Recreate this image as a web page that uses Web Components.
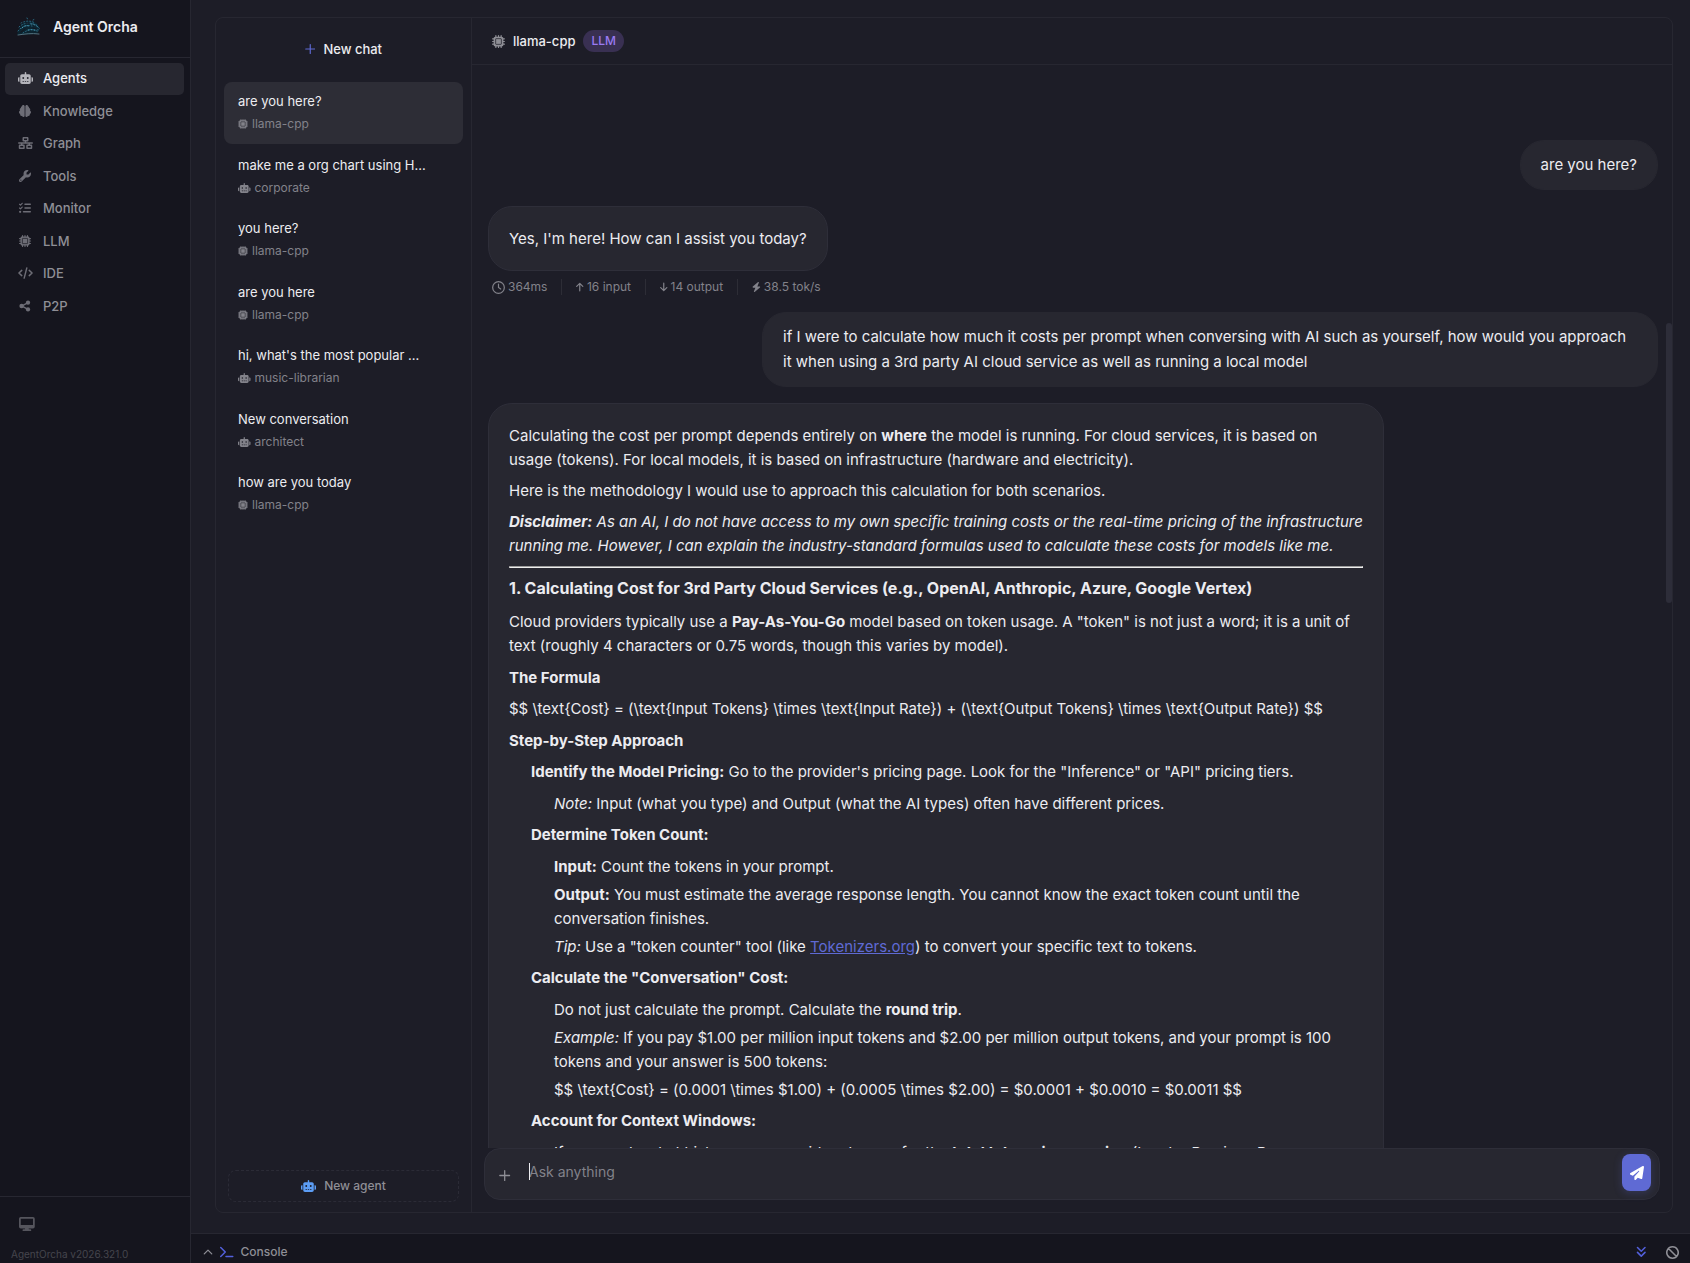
<!DOCTYPE html>
<html lang="en">
<head>
<meta charset="utf-8">
<meta name="viewport" content="width=device-width, initial-scale=1">
<title>Agent Orcha</title>
<style>
    :root {
        --bg: #1d1d27;
        --bg-dark: #15151e;
        --surface: #272730;
        --surface-active: #2d2d36;
        --line: #272731;
        --text: #ececf0;
        --muted: #8f8f96;
        --dim: #82828a;
        --faint: #45454d;
        --accent: #5f6ad4;
    }

    body {
        margin: 0;
        height: 100vh;
        overflow: hidden;
        background: var(--bg);
        color: var(--text);
        font-family: Inter, "Liberation Sans", sans-serif;
        font-size: 13px;
        line-height: 20px;
    }
</style>
</head>
<body>

<orcha-app>
    <app-sidebar slot="sidebar" version="AgentOrcha v2026.321.0">
        <nav-item icon="robot" active>Agents</nav-item>
        <nav-item icon="brain">Knowledge</nav-item>
        <nav-item icon="network">Graph</nav-item>
        <nav-item icon="wrench">Tools</nav-item>
        <nav-item icon="list">Monitor</nav-item>
        <nav-item icon="chip">LLM</nav-item>
        <nav-item icon="code">IDE</nav-item>
        <nav-item icon="share">P2P</nav-item>
    </app-sidebar>

    <conversation-list slot="conversations">
        <conversation-item icon="chip" agent="llama-cpp" active>are you here?</conversation-item>
        <conversation-item icon="robot" agent="corporate">make me a org chart using H...</conversation-item>
        <conversation-item icon="chip" agent="llama-cpp">you here?</conversation-item>
        <conversation-item icon="chip" agent="llama-cpp">are you here</conversation-item>
        <conversation-item icon="robot" agent="music-librarian">hi, what's the most popular ...</conversation-item>
        <conversation-item icon="robot" agent="architect">New conversation</conversation-item>
        <conversation-item icon="chip" agent="llama-cpp">how are you today</conversation-item>
    </conversation-list>

    <chat-panel slot="chat" agent="llama-cpp" kind="LLM">
        <chat-message from="user">are you here?</chat-message>
        <chat-message from="agent">Yes, I'm here! How can I assist you today?</chat-message>
        <message-stats time="364ms" input="16 input" output="14 output" speed="38.5 tok/s"></message-stats>
        <chat-message from="user">if I were to calculate how much it costs per prompt when conversing with AI such as yourself, how would you approach it when using a 3rd party AI cloud service as well as running a local model</chat-message>
        <chat-message from="agent">
            <rich-text>
                <template>
                    <p>Calculating the cost per prompt depends entirely on <strong>where</strong> the model is running. For cloud services, it is based on usage (tokens). For local models, it is based on infrastructure (hardware and electricity).</p>
                    <p>Here is the methodology I would use to approach this calculation for both scenarios.</p>
                    <p><em><strong>Disclaimer:</strong> As an AI, I do not have access to my own specific training costs or the real-time pricing of the infrastructure running me. However, I can explain the industry-standard formulas used to calculate these costs for models like me.</em></p>
                    <hr>
                    <h3>1. Calculating Cost for 3rd Party Cloud Services (e.g., OpenAI, Anthropic, Azure, Google Vertex)</h3>
                    <p>Cloud providers typically use a <strong>Pay-As-You-Go</strong> model based on token usage. A "token" is not just a word; it is a unit of text (roughly 4 characters or 0.75 words, though this varies by model).</p>
                    <h4>The Formula</h4>
                    <p>$$ \text{Cost} = (\text{Input Tokens} \times \text{Input Rate}) + (\text{Output Tokens} \times \text{Output Rate}) $$</p>
                    <h4>Step-by-Step Approach</h4>
                    <ol>
                        <li><strong>Identify the Model Pricing:</strong> Go to the provider's pricing page. Look for the "Inference" or "API" pricing tiers.
                            <ul>
                                <li><em>Note:</em> Input (what you type) and Output (what the AI types) often have different prices.</li>
                            </ul>
                        </li>
                        <li><strong>Determine Token Count:</strong>
                            <ul>
                                <li><strong>Input:</strong> Count the tokens in your prompt.</li>
                                <li><strong>Output:</strong> You must estimate the average response length. You cannot know the exact token count until the conversation finishes.</li>
                                <li><em>Tip:</em> Use a "token counter" tool (like <a href="#tokenizers">Tokenizers.org</a>) to convert your specific text to tokens.</li>
                            </ul>
                        </li>
                        <li><strong>Calculate the "Conversation" Cost:</strong>
                            <ul>
                                <li>Do not just calculate the prompt. Calculate the <strong>round trip</strong>.</li>
                                <li><em>Example:</em> If you pay $1.00 per million input tokens and $2.00 per million output tokens, and your prompt is 100 tokens and your answer is 500 tokens:</li>
                                <li>$$ \text{Cost} = (0.0001 \times $1.00) + (0.0005 \times $2.00) = $0.0001 + $0.0010 = $0.0011 $$</li>
                            </ul>
                        </li>
                        <li><strong>Account for Context Windows:</strong>
                            <ul>
                                <li>If you send a chat history, your provider charges for the <strong>total tokens in a session</strong> (Input + Previous Responses + growth).</li>
                            </ul>
                        </li>
                    </ol>
                </template>
            </rich-text>
        </chat-message>
    </chat-panel>

    <console-bar slot="console"></console-bar>
</orcha-app>

<script>
/* Each icon is [viewBox, markup]; shapes take their colour from currentColor */
const icons = {
    robot: ['0 0 640 512', '<path d="M320 0c17.7 0 32 14.3 32 32V96H472c39.8 0 72 32.2 72 72V440c0 39.8-32.2 72-72 72H168c-39.8 0-72-32.2-72-72V168c0-39.8 32.2-72 72-72H288V32c0-17.7 14.3-32 32-32zM208 384c-8.8 0-16 7.2-16 16s7.2 16 16 16h32c8.8 0 16-7.2 16-16s-7.2-16-16-16H208zm96 0c-8.8 0-16 7.2-16 16s7.2 16 16 16h32c8.8 0 16-7.2 16-16s-7.2-16-16-16H304zm96 0c-8.8 0-16 7.2-16 16s7.2 16 16 16h32c8.8 0 16-7.2 16-16s-7.2-16-16-16H400zM264 256a40 40 0 1 0-80 0 40 40 0 1 0 80 0zm152 40a40 40 0 1 0 0-80 40 40 0 1 0 0 80zM48 224H64V416H48c-26.5 0-48-21.5-48-48V272c0-26.5 21.5-48 48-48zm544 0c26.5 0 48 21.5 48 48v96c0 26.5-21.5 48-48 48H576V224h16z"/>'],
    brain: ['0 0 512 512', '<path d="M184 0c30.9 0 56 25.1 56 56V456c0 30.9-25.1 56-56 56c-28.9 0-52.7-21.9-55.7-50.1c-5.2 1.4-10.7 2.1-16.3 2.1c-35.3 0-64-28.7-64-64c0-7.4 1.3-14.6 3.6-21.2C21.4 367.4 0 338.2 0 304c0-31.9 18.7-59.5 45.8-72.3C37.1 220.8 32 207 32 192c0-30.7 21.6-56.3 50.4-62.6C80.8 123.9 80 118 80 112c0-29.9 20.6-55.1 48.3-62.1C131.3 21.9 155.1 0 184 0zM328 0c28.9 0 52.6 21.9 55.7 49.9c27.8 7 48.3 32.1 48.3 62.1c0 6-.8 11.9-2.4 17.4c28.8 6.2 50.4 31.9 50.4 62.6c0 15-5.1 28.8-13.8 39.7C493.3 244.5 512 272.1 512 304c0 34.2-21.4 63.4-51.6 74.8c2.3 6.6 3.6 13.8 3.6 21.2c0 35.3-28.7 64-64 64c-5.6 0-11.1-.7-16.3-2.1c-3 28.2-26.8 50.1-55.7 50.1c-30.9 0-56-25.1-56-56V56c0-30.9 25.1-56 56-56z"/>'],
    network: ['0 0 640 512', '<path d="M256 64H384v64H256V64zM240 0c-26.5 0-48 21.5-48 48v96c0 26.5 21.5 48 48 48h48v32H32c-17.7 0-32 14.3-32 32s14.3 32 32 32h96v32H80c-26.5 0-48 21.5-48 48v96c0 26.5 21.5 48 48 48H240c26.5 0 48-21.5 48-48V368c0-26.5-21.5-48-48-48H192V288H448v32H400c-26.5 0-48 21.5-48 48v96c0 26.5 21.5 48 48 48H560c26.5 0 48-21.5 48-48V368c0-26.5-21.5-48-48-48H512V288h96c17.7 0 32-14.3 32-32s-14.3-32-32-32H352V192h48c26.5 0 48-21.5 48-48V48c0-26.5-21.5-48-48-48H240zM96 448V384H224v64H96zm320-64H544v64H416V384z"/>'],
    wrench: ['0 0 512 512', '<path d="M352 320c88.4 0 160-71.6 160-160c0-15.3-2.2-30.1-6.2-44.2c-3.1-10.8-16.4-13.2-24.3-5.3l-76.8 76.8c-3 3-7.1 4.7-11.3 4.7H336c-8.8 0-16-7.2-16-16V118.6c0-4.2 1.7-8.3 4.7-11.3l76.8-76.8c7.9-7.9 5.4-21.2-5.3-24.3C382.1 2.2 367.3 0 352 0C263.6 0 192 71.6 192 160c0 19.1 3.4 37.5 9.5 54.5L19.9 396.1C7.2 408.8 0 426.1 0 444.1C0 481.6 30.4 512 67.9 512c18 0 35.3-7.2 48-19.9L297.5 310.5c17 6.2 35.4 9.5 54.5 9.5zM80 408a24 24 0 1 1 0 48 24 24 0 1 1 0-48z"/>'],
    list: ['0 0 512 512', '<g fill="none" stroke="currentColor" stroke-width="48" stroke-linecap="round" stroke-linejoin="round"><path d="M24 96l40 38 72-80M24 256l40 38 72-80"/><path stroke-width="64" d="M256 96H480M256 256H480M192 416H480"/></g><circle cx="48" cy="416" r="48"/>'],
    chip: ['0 0 512 512', '<path d="M176 24c0-13.3-10.7-24-24-24s-24 10.7-24 24V64c-35.3 0-64 28.7-64 64H24c-13.3 0-24 10.7-24 24s10.7 24 24 24H64v56H24c-13.3 0-24 10.7-24 24s10.7 24 24 24H64v56H24c-13.3 0-24 10.7-24 24s10.7 24 24 24H64c0 35.3 28.7 64 64 64v40c0 13.3 10.7 24 24 24s24-10.7 24-24V448h56v40c0 13.3 10.7 24 24 24s24-10.7 24-24V448h56v40c0 13.3 10.7 24 24 24s24-10.7 24-24V448c35.3 0 64-28.7 64-64h40c13.3 0 24-10.7 24-24s-10.7-24-24-24H448V280h40c13.3 0 24-10.7 24-24s-10.7-24-24-24H448V176h40c13.3 0 24-10.7 24-24s-10.7-24-24-24H448c0-35.3-28.7-64-64-64V24c0-13.3-10.7-24-24-24s-24 10.7-24 24V64H280V24c0-13.3-10.7-24-24-24s-24 10.7-24 24V64H176V24z"/><rect x="144" y="144" width="224" height="224" rx="16" fill="none" stroke="var(--bg)" stroke-width="28"/>'],
    code: ['0 0 640 512', '<path fill="none" stroke="currentColor" stroke-width="62" stroke-linecap="round" stroke-linejoin="round" d="M160 144L40 256l120 112M480 144l120 112-120 112M376 40L264 472"/>'],
    share: ['0 0 512 512', '<path fill="none" stroke="currentColor" stroke-width="60" d="M380 110L130 256l250 146"/><circle cx="112" cy="256" r="96"/><circle cx="384" cy="112" r="92"/><circle cx="384" cy="400" r="92"/>'],
    desktop: ['0 0 576 512', '<path fill-rule="evenodd" d="M64 0h448a64 64 0 0 1 64 64v288a64 64 0 0 1-64 64H352l11 32h53a32 32 0 0 1 0 64H160a32 32 0 0 1 0-64h53l11-32H64a64 64 0 0 1-64-64V64A64 64 0 0 1 64 0zM64 64v224h448V64z"/>'],
    plus: ['0 0 448 512', '<path fill="none" stroke="currentColor" stroke-width="50" stroke-linecap="round" d="M224 64v384M32 256h384"/>'],
    clock: ['0 0 512 512', '<g fill="none" stroke="currentColor" stroke-width="48" stroke-linecap="round"><circle cx="256" cy="256" r="230"/><path d="M256 120v136l88 60"/></g>'],
    up: ['0 0 384 512', '<path fill="none" stroke="currentColor" stroke-width="62" stroke-linecap="round" stroke-linejoin="round" d="M192 450V76M36 224L192 70l156 154"/>'],
    down: ['0 0 384 512', '<path fill="none" stroke="currentColor" stroke-width="62" stroke-linecap="round" stroke-linejoin="round" d="M192 62v374M36 288l156 154 156-154"/>'],
    bolt: ['0 0 448 512', '<path d="M349 44c6-14 1-30-11-39s-29-8-41 2L41 231a32 32 0 0 0 21 57h112L99 468c-6 14-1 30 11 39s29 8 41-2l256-224a32 32 0 0 0-21-57H274z"/>'],
    chevron: ['0 0 512 512', '<path fill="none" stroke="currentColor" stroke-width="64" stroke-linecap="round" stroke-linejoin="round" d="M64 352l192-192 192 192"/>'],
    terminal: ['0 0 576 512', '<path fill="none" stroke="currentColor" stroke-width="64" stroke-linecap="round" stroke-linejoin="round" d="M32 64l192 192L32 448M256 448h288"/>'],
    angles: ['0 0 448 512', '<path fill="none" stroke="currentColor" stroke-width="64" stroke-linecap="round" stroke-linejoin="round" d="M64 64l160 160L384 64M64 272l160 160 160-160"/>'],
    ban: ['0 0 512 512', '<path fill="none" stroke="currentColor" stroke-width="62" d="M256 32a224 224 0 1 0 .1 0zM98 98l316 316"/>'],
    send: ['0 0 512 512', '<path d="M498.1 5.6c10.1 7 15.4 19.1 13.5 31.2l-64 416c-1.5 9.7-7.4 18.2-16 23s-18.9 5.4-28 1.6L284 427.7l-68.5 74.1c-8.9 9.7-22.9 12.9-35.2 8.1S160 493.2 160 480V396.4c0-4 1.5-7.8 4.2-10.7L331.8 202.8c5.8-6.3 5.6-16-.4-22s-15.7-6.4-22-.7L106 360.8 17.7 316.6C7.1 311.3 .3 300.7 0 288.9s5.9-22.8 16.1-28.7l448-256c10.7-6.1 23.9-5.5 34 1.4z"/>']
};

class UiIcon extends HTMLElement {

    connectedCallback() {
        const [box, shapes] = icons[this.getAttribute('name')];
        const size = this.getAttribute('size') || 12;
        this.attachShadow({ mode: 'open' });
        this.shadowRoot.innerHTML = `
        <style>
            :host {
                display: inline-flex;
                flex: none;
            }

            svg {
                display: block;
                fill: currentColor;
            }
        </style>
        <svg viewBox="${box}" height="${size}" aria-hidden="true">${shapes}</svg>
        `;
    }
}

class OrchaApp extends HTMLElement {

    connectedCallback() {
        this.attachShadow({ mode: 'open' });
        this.shadowRoot.innerHTML = `
        <style>
            :host {
                display: grid;
                grid-template-columns: 191px minmax(0, 1fr);
                height: 100%;
            }

            .main {
                display: flex;
                flex-direction: column;
                min-height: 0;
            }

            .panel {
                flex: 1;
                min-height: 0;
                display: grid;
                grid-template-columns: 256px minmax(0, 1fr);
                grid-template-rows: minmax(0, 1fr);
                margin: 17px 17px 20px 24px;
                border: 1px solid var(--line);
                border-radius: 8px;
                overflow: hidden;
            }
        </style>
        <slot name="sidebar"></slot>
        <div class="main">
            <main class="panel">
                <slot name="conversations"></slot>
                <slot name="chat"></slot>
            </main>
            <slot name="console"></slot>
        </div>
        `;
    }
}

class AppSidebar extends HTMLElement {

    connectedCallback() {
        this.attachShadow({ mode: 'open' });
        this.shadowRoot.innerHTML = `
        <style>
            :host {
                display: flex;
                flex-direction: column;
                background: var(--bg-dark);
                border-right: 1px solid var(--line);
            }

            header {
                display: flex;
                align-items: center;
                gap: 12px;
                height: 57px;
                padding: 0 16px 4px;
                box-sizing: border-box;
                font-size: 14px;
                font-weight: 600;
            }

            nav {
                flex: 1;
                border-top: 1px solid var(--line);
                padding: 5px 6px 0 5px;
            }

            .items {
                display: grid;
                grid-auto-rows: 1fr;
                height: 260px;
            }

            footer {
                border-top: 1px solid var(--line);
                height: 66px;
                overflow: hidden;
                color: var(--faint);
            }

            button {
                display: block;
                margin: 20px 0 0 19px;
                padding: 0;
                border: 0;
                background: none;
                color: #55555d;
            }

            small {
                display: block;
                margin: 12px 0 0 11px;
                font-size: 10px;
                line-height: 16px;
            }
        </style>
        <header>
            <svg width="25" height="20" viewBox="0 0 25 20" fill="none" stroke-linecap="round" aria-hidden="true">
                <path fill="#0c2430" d="M1 18C3 8 7 4 13 4c6 0 10 3 11 8l-3 5z"/>
                <g stroke="#2b6880" stroke-dasharray="1 2">
                    <path d="M5 6c4-2 9-3 14 0M3 10c5-5 13-5 19-1M2 14c4-5 9-6 14-5M7 16c4-3 9-4 16-3M11 1l1 2M17 3l2-1"/>
                </g>
                <path stroke="#4b9dba" stroke-dasharray="1 2" d="M6 11c2-2 4-3 7-2M15 7c3 0 6 2 8 4M12 13c3-1 6 0 9 1"/>
                <path stroke="#54727f" d="M2 18c7-1 13-2 21-1"/>
                <path stroke="#15151e" d="M5 15l4-3M17 11l3 1M10 6l3 0"/>
            </svg>
            <span>Agent Orcha</span>
        </header>
        <nav aria-label="Main"><div class="items"><slot></slot></div></nav>
        <footer>
            <button type="button" aria-label="Display"><ui-icon name="desktop" size="14"></ui-icon></button>
            <small>${this.getAttribute('version')}</small>
        </footer>
        `;
    }
}

class NavItem extends HTMLElement {

    connectedCallback() {
        this.attachShadow({ mode: 'open' });
        this.shadowRoot.innerHTML = `
        <style>
            :host {
                display: block;
                color: var(--muted);
            }

            a {
                display: flex;
                align-items: center;
                gap: 8px;
                height: 32px;
                box-sizing: border-box;
                padding: 0 10px 2px;
                border-radius: 5px;
                color: inherit;
                font-weight: 500;
                text-decoration: none;
            }

            ui-icon {
                width: 20px;
                justify-content: center;
                color: #6d6d76;
                --bg: var(--bg-dark);
            }

            :host([active]) a {
                background: var(--surface);
                color: var(--text);
            }

            :host([active]) ui-icon {
                color: #b4b4ba;
            }
        </style>
        <a href="#"><ui-icon name="${this.getAttribute('icon')}"></ui-icon><slot></slot></a>
        `;
    }
}

class ConversationList extends HTMLElement {

    connectedCallback() {
        this.attachShadow({ mode: 'open' });
        this.shadowRoot.innerHTML = `
        <style>
            :host {
                display: flex;
                flex-direction: column;
                padding: 0 8px;
                border-right: 1px solid var(--line);
            }

            button {
                display: flex;
                align-items: center;
                justify-content: center;
                gap: 8px;
                font: inherit;
                font-weight: 500;
            }

            .new-chat {
                height: 62px;
                margin-bottom: 2px;
                padding: 0;
                border: 0;
                background: none;
                color: var(--text);
            }

            .new-chat ui-icon {
                color: var(--accent);
            }

            .items {
                display: grid;
                grid-auto-rows: 1fr;
                gap: 2px;
                height: 443px;
            }

            .new-agent {
                margin: auto 4px 10px;
                height: 32px;
                padding: 0;
                border: 1px dashed #2b2b36;
                border-radius: 8px;
                background: none;
                color: var(--muted);
                font-size: 12px;
            }

            .new-agent ui-icon {
                color: #5c9df5;
            }
        </style>
        <button class="new-chat" type="button"><ui-icon name="plus"></ui-icon>New chat</button>
        <div class="items"><slot></slot></div>
        <button class="new-agent" type="button"><ui-icon name="robot"></ui-icon>New agent</button>
        `;
    }
}

class ConversationItem extends HTMLElement {

    connectedCallback() {
        this.attachShadow({ mode: 'open' });
        this.shadowRoot.innerHTML = `
        <style>
            :host {
                display: grid;
            }

            a {
                padding: 9px 14px;
                border-radius: 8px;
                color: inherit;
                text-decoration: none;
            }

            :host([active]) a {
                background: var(--surface-active);
            }

            .agent {
                display: flex;
                align-items: center;
                gap: 4px;
                margin-top: 3px;
                color: var(--dim);
                font-size: 12px;
            }
        </style>
        <a href="#">
            <slot></slot>
            <span class="agent"><ui-icon name="${this.getAttribute('icon')}" size="10"></ui-icon>${this.getAttribute('agent')}</span>
        </a>
        `;
    }
}

class ChatPanel extends HTMLElement {

    connectedCallback() {
        this.attachShadow({ mode: 'open' });
        this.shadowRoot.innerHTML = `
        <style>
            :host {
                display: flex;
                flex-direction: column;
                position: relative;
                min-height: 0;
            }

            header {
                display: flex;
                align-items: center;
                gap: 8px;
                height: 46px;
                padding: 0 20px;
                border-bottom: 1px solid var(--line);
                font-weight: 500;
            }

            header ui-icon {
                color: var(--muted);
            }

            .badge {
                padding: 0 8px;
                border-radius: 11px;
                background: #393052;
                color: #9a7bf2;
                font-size: 12px;
                line-height: 22px;
            }

            .messages {
                flex: 1;
                min-height: 0;
                overflow: hidden;
                display: flex;
                flex-direction: column;
                padding: 75px 14px 0 16px;
            }

            .thumb {
                position: absolute;
                top: 305px;
                right: 0;
                width: 6px;
                height: 280px;
                border-radius: 3px;
                background: #2d2d39;
            }
        </style>
        <header>
            <ui-icon name="chip" size="13"></ui-icon>
            <span>${this.getAttribute('agent')}</span>
            <span class="badge">${this.getAttribute('kind')}</span>
        </header>
        <div class="messages"><slot></slot></div>
        <div class="thumb"></div>
        <chat-composer></chat-composer>
        `;
    }
}

class ChatMessage extends HTMLElement {

    connectedCallback() {
        this.attachShadow({ mode: 'open' });
        this.shadowRoot.innerHTML = `
        <style>
            :host {
                display: block;
                flex: none;
                box-sizing: border-box;
                max-width: 896px;
                border: 1px solid var(--surface);
                border-radius: 24px;
                background: var(--surface);
                font-size: 15px;
            }

            :host([from="user"]) {
                align-self: flex-end;
                margin-bottom: 16px;
                padding: 11px 20px 12px;
                line-height: 25px;
            }

            :host([from="agent"]) {
                align-self: flex-start;
                padding: 20px 20px 19px;
                border-color: #2e2e39;
                line-height: 24px;
            }
        </style>
        <slot></slot>
        `;
    }
}

/* Takes the formatted answer from a template child */
class RichText extends HTMLElement {

    connectedCallback() {
        this.attachShadow({ mode: 'open' });
        this.shadowRoot.innerHTML = `
        <style>
            :host {
                display: block;
            }

            p {
                margin: 0 0 7px;
            }

            strong {
                font-weight: 700;
            }

            hr {
                margin: 8px 0;
                color: #d8d8d8;
            }

            h3, h4 {
                margin: 8px 0 7px;
                font-size: 15px;
                line-height: 24px;
                font-weight: 700;
            }

            h3 {
                margin: 0 0 10px;
                font-size: 16px;
            }

            ol, ul {
                margin: 0;
                padding-left: 22px;
                list-style: none;
            }

            ol > li {
                margin-bottom: 7px;
            }

            ul {
                padding-left: 23px;
                padding-top: 8px;
            }

            ul > li + li {
                margin-top: 4px;
            }

            a {
                color: var(--accent);
            }
        </style>
        `;
        this.shadowRoot.append(this.querySelector('template').content.cloneNode(true));
    }
}

class MessageStats extends HTMLElement {

    connectedCallback() {
        this.attachShadow({ mode: 'open' });
        this.shadowRoot.innerHTML = `
        <style>
            :host {
                display: flex;
                flex: none;
                align-items: center;
                gap: 14px;
                margin: 6px 0 15px;
                padding-left: 4px;
                color: var(--dim);
                font-size: 12px;
            }

            span {
                display: flex;
                align-items: center;
                gap: 3px;
            }

            i {
                width: 1px;
                height: 16px;
                background: var(--surface-active);
            }
        </style>
        <span><ui-icon name="clock" size="13"></ui-icon>${this.getAttribute('time')}</span><i></i>
        <span><ui-icon name="up" size="10"></ui-icon>${this.getAttribute('input')}</span><i></i>
        <span><ui-icon name="down" size="10"></ui-icon>${this.getAttribute('output')}</span><i></i>
        <span><ui-icon name="bolt" size="10"></ui-icon>${this.getAttribute('speed')}</span>
        `;
    }
}

class ChatComposer extends HTMLElement {

    connectedCallback() {
        this.attachShadow({ mode: 'open' });
        this.shadowRoot.innerHTML = `
        <style>
            :host {
                display: flex;
                margin: 0 12px 12px;
                height: 50px;
                border: 1px solid #2e2e39;
                border-radius: 16px;
                background: var(--surface);
            }

            button {
                display: flex;
                align-items: center;
                justify-content: center;
                padding: 0;
                border: 0;
                background: none;
                color: var(--muted);
            }

            .attach {
                width: 40px;
                padding-top: 2px;
            }

            .field {
                flex: 1;
                display: flex;
                position: relative;
                margin-left: 4px;
            }

            textarea {
                flex: 1;
                height: 24px;
                margin: 11px 0 0;
                padding: 0;
                border: 0;
                outline: 0;
                resize: none;
                overflow: hidden;
                background: none;
                color: var(--text);
                font: inherit;
                font-size: 14px;
                line-height: 24px;
            }

            textarea::placeholder {
                color: var(--dim);
            }

            .caret {
                position: absolute;
                top: 14px;
                left: 0;
                width: 1px;
                height: 17px;
                background: var(--text);
            }

            .send {
                width: 29px;
                height: 37px;
                margin: 5px 8px 0 0;
                border-radius: 8px;
                background: var(--accent);
                color: #fff;
                box-shadow: 0 2px 8px rgba(95, 106, 212, 0.25);
            }
        </style>
        <button class="attach" type="button" aria-label="Attach"><ui-icon name="plus" size="13"></ui-icon></button>
        <div class="field">
            <textarea rows="1" placeholder="Ask anything" aria-label="Message"></textarea>
            <span class="caret"></span>
        </div>
        <button class="send" type="button" aria-label="Send"><ui-icon name="send" size="14"></ui-icon></button>
        `;
    }
}

class ConsoleBar extends HTMLElement {

    connectedCallback() {
        this.attachShadow({ mode: 'open' });
        this.shadowRoot.innerHTML = `
        <style>
            :host {
                display: flex;
                align-items: center;
                height: 29px;
                padding: 0 11px 0 12px;
                border-top: 1px solid var(--line);
                background: var(--bg-dark);
                color: var(--muted);
            }

            button {
                display: flex;
                align-items: center;
                gap: 7px;
                margin-top: 7px;
                padding: 0;
                border: 0;
                background: none;
                color: inherit;
                font: inherit;
                font-size: 12px;
                font-weight: 500;
            }

            .tools {
                display: flex;
                gap: 20px;
                margin-left: auto;
            }

            .accent {
                color: #5360dc;
            }
        </style>
        <button type="button"><ui-icon name="chevron" size="10"></ui-icon><ui-icon class="accent" name="terminal"></ui-icon>Console</button>
        <div class="tools">
            <button class="accent" type="button" aria-label="Scroll to end"><ui-icon name="angles"></ui-icon></button>
            <button type="button" aria-label="Clear"><ui-icon name="ban" size="13"></ui-icon></button>
        </div>
        `;
    }
}

customElements.define('ui-icon', UiIcon);
customElements.define('orcha-app', OrchaApp);
customElements.define('app-sidebar', AppSidebar);
customElements.define('nav-item', NavItem);
customElements.define('conversation-list', ConversationList);
customElements.define('conversation-item', ConversationItem);
customElements.define('chat-panel', ChatPanel);
customElements.define('chat-message', ChatMessage);
customElements.define('rich-text', RichText);
customElements.define('message-stats', MessageStats);
customElements.define('chat-composer', ChatComposer);
customElements.define('console-bar', ConsoleBar);
</script>
</body>
</html>
